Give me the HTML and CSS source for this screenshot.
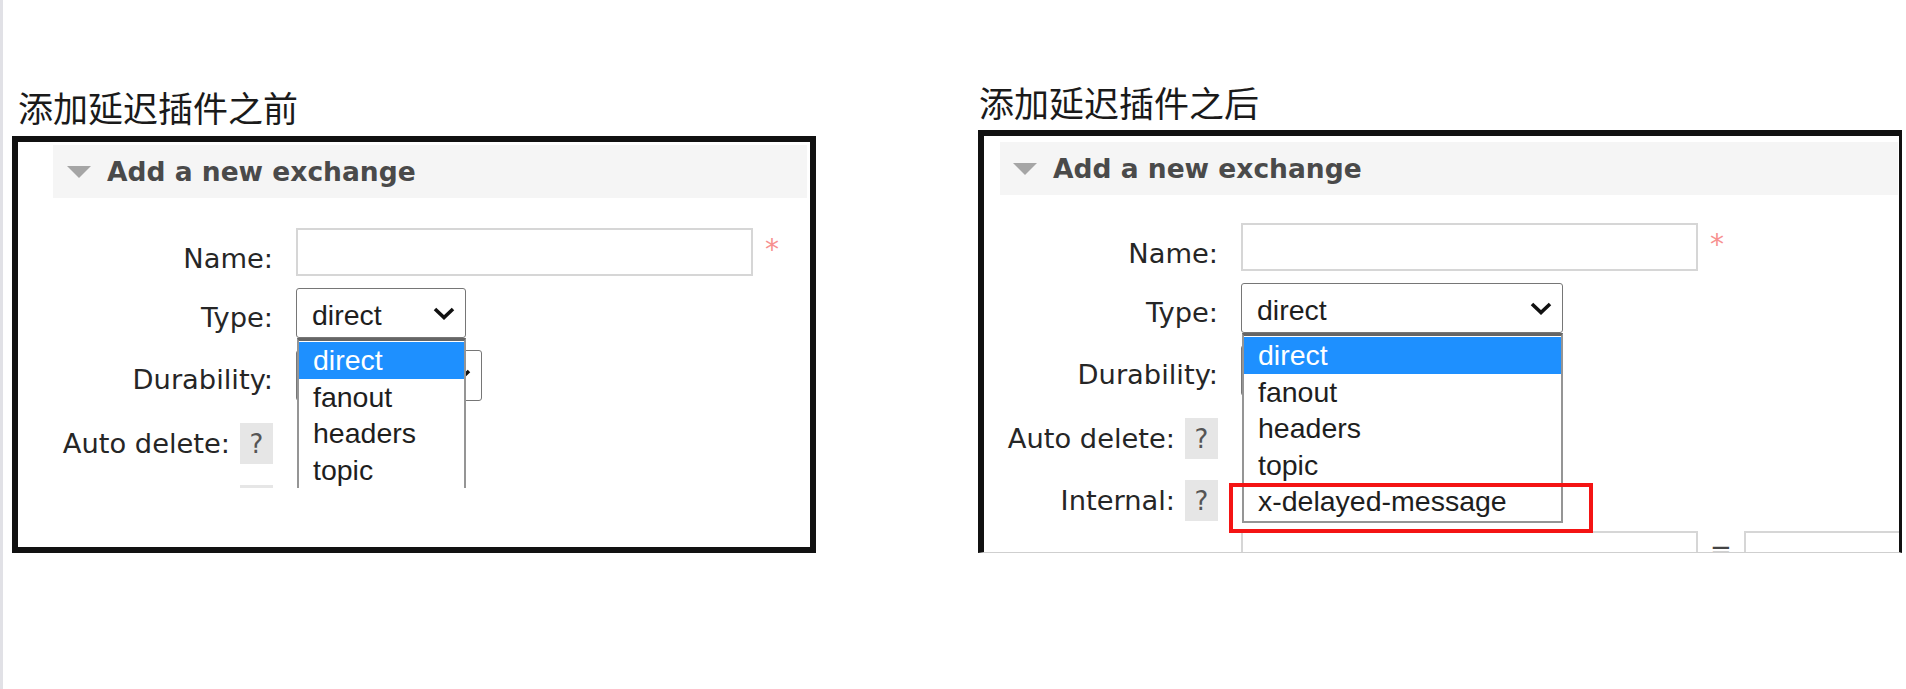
FILE: index.html
```html
<!DOCTYPE html>
<html lang="zh-CN">
<head>
<meta charset="utf-8">
<title>添加延迟插件前后 - Add a new exchange</title>
<link rel="stylesheet" href="styles.css">
</head>
<body>
<div class="page">

  <section class="panel panel--before">
    <h2 class="panel__title">添加延迟插件之前</h2>
    <div class="frame">
      <div class="shot">
        <div class="section-head"><span class="toggle"></span><span class="section-head__text">Add a new exchange</span></div>
        <div class="form">
          <div class="row row--text">
            <div class="label">Name:</div>
            <div class="control">
              <input class="input" type="text" aria-label="Name">
              <span class="mand">*</span>
            </div>
          </div>
          <div class="row row--select">
            <div class="label">Type:</div>
            <div class="control">
              <div class="select select--type">
                <span class="select__value">direct</span>
                <svg class="chevron" viewBox="0 0 22 13" aria-hidden="true"><polyline points="2,2 11,10.5 20,2"/></svg>
                <ul class="options">
                  <li class="option option--active">direct</li>
                  <li class="option">fanout</li>
                  <li class="option">headers</li>
                  <li class="option">topic</li>
                </ul>
              </div>
            </div>
          </div>
          <div class="row row--select">
            <div class="label">Durability:</div>
            <div class="control">
              <div class="select select--durability" aria-label="Durability">
                <svg class="chevron" viewBox="0 0 22 13" aria-hidden="true"><polyline points="2,2 11,10.5 20,2"/></svg>
              </div>
            </div>
          </div>
          <div class="row">
            <div class="label">Auto delete:<span class="help">?</span></div>
            <div class="control"></div>
          </div>
          <div class="row">
            <div class="label"><span class="help help--cut"></span></div>
            <div class="control"></div>
          </div>
        </div>
      </div>
    </div>
  </section>

  <section class="panel panel--after">
    <h2 class="panel__title">添加延迟插件之后</h2>
    <div class="frame">
      <div class="shot">
        <div class="section-head"><span class="toggle"></span><span class="section-head__text">Add a new exchange</span></div>
        <div class="form">
          <div class="row row--text">
            <div class="label">Name:</div>
            <div class="control">
              <input class="input" type="text" aria-label="Name">
              <span class="mand">*</span>
            </div>
          </div>
          <div class="row row--select">
            <div class="label">Type:</div>
            <div class="control">
              <div class="select select--type">
                <span class="select__value">direct</span>
                <svg class="chevron" viewBox="0 0 22 13" aria-hidden="true"><polyline points="2,2 11,10.5 20,2"/></svg>
                <ul class="options">
                  <li class="option option--active">direct</li>
                  <li class="option">fanout</li>
                  <li class="option">headers</li>
                  <li class="option">topic</li>
                  <li class="option option--marked">x-delayed-message<span class="mark-box"></span></li>
                </ul>
              </div>
            </div>
          </div>
          <div class="row row--select">
            <div class="label">Durability:</div>
            <div class="control">
              <div class="select select--durability" aria-label="Durability">
                <svg class="chevron" viewBox="0 0 22 13" aria-hidden="true"><polyline points="2,2 11,10.5 20,2"/></svg>
              </div>
            </div>
          </div>
          <div class="row">
            <div class="label">Auto delete:<span class="help">?</span></div>
            <div class="control"></div>
          </div>
          <div class="row">
            <div class="label">Internal:<span class="help">?</span></div>
            <div class="control"></div>
          </div>
          <div class="row row--args">
            <div class="label"></div>
            <div class="control">
              <input class="input" type="text" aria-label="Argument key">
              <span class="equals">=</span>
              <input class="input" type="text" aria-label="Argument value">
            </div>
          </div>
        </div>
      </div>
    </div>
  </section>

</div>
</body>
</html>
```

FILE: styles.css
```css
* {
  box-sizing: border-box;
}

html,
body {
  margin: 0;
  background: #fff;
}

body {
  font-family: "DejaVu Sans", Verdana, sans-serif;
  color: #333;
}

.page {
  display: flex;
  align-items: flex-start;
  width: 1906px;
  height: 689px;
  border-left: 3px solid #e1e1e6;
  overflow: hidden;
}

.panel {
  flex: none;
}

.panel--before {
  width: 804px;
  margin-left: 9px;
  padding-top: 89px;
}

.panel--after {
  width: 924px;
  margin-left: 162px;
  padding-top: 84px;
}

.panel__title {
  margin: 0;
  font: 400 35px/35px "Noto Sans CJK SC", "Noto Sans", sans-serif;
  color: #1a1a1a;
  white-space: nowrap;
}

.panel--before .panel__title {
  padding-left: 6px;
  margin-bottom: 12px;
}

.panel--after .panel__title {
  padding-left: 1px;
  margin-bottom: 11px;
}

.frame {
  background: #fff;
}

.panel--before .frame {
  height: 417px;
  border: 6px solid #111;
}

.panel--after .frame {
  border-style: solid;
  border-color: #111 #111 #cfcfcf #111;
  border-width: 6px 3px 1px 6px;
}

.shot {
  position: relative;
  overflow: hidden;
}

.panel--before .shot {
  height: 346px;
  padding-top: 3px;
}

.panel--after .shot {
  height: 416px;
  padding-top: 6px;
}

/* section header */
.section-head {
  display: flex;
  align-items: center;
  gap: 16px;
  height: 53px;
  padding-left: 14px;
  background: #f5f5f5;
}

.panel--before .section-head {
  margin: 0 3px 0 35px;
}

.panel--after .section-head {
  margin: 0 1px 0 16px;
  padding-left: 13px;
}

.toggle {
  flex: none;
  width: 0;
  height: 0;
  border-left: 12.5px solid transparent;
  border-right: 12.5px solid transparent;
  border-top: 12px solid #a5a5a5;
}

.section-head__text {
  font: 700 26.5px/30px "DejaVu Sans", Verdana, sans-serif;
  color: #4a4a4a;
  white-space: nowrap;
}

/* form */
.panel--before .form {
  --label-w: 255px;
  margin-top: 28px;
}

.panel--after .form {
  --label-w: 234px;
  margin-top: 26px;
}

.row {
  display: grid;
  grid-template-columns: var(--label-w) 1fr;
  column-gap: 23px;
  align-items: start;
  height: 62px;
}

.label {
  display: flex;
  justify-content: flex-end;
  align-items: center;
  gap: 10px;
  height: 43px;
  margin-top: 10px;
  font-size: 27.3px;
  line-height: 30px;
  color: #262626;
  white-space: nowrap;
}

.row--text .label {
  margin-top: 11px;
}

.row--select .label {
  margin-top: 8px;
}

.help {
  display: inline-flex;
  justify-content: center;
  align-items: center;
  flex: none;
  width: 33px;
  height: 41px;
  background: #e6e6e6;
  font-size: 26px;
  color: #555;
}

.control {
  display: flex;
  align-items: flex-start;
  min-width: 0;
}

.input {
  flex: none;
  width: 457px;
  height: 48px;
  margin: 2px 0 0;
  padding: 0;
  border: 2px solid #d6d6d6;
  background: #fff;
  outline: none;
}

.row--args .input {
  margin-top: 0;
}

.mand {
  margin: 10px 0 0 12px;
  font-size: 28px;
  line-height: 28px;
  color: #f79090;
}

.equals {
  margin: 4px 12px 0;
  font-size: 26px;
  line-height: 30px;
  color: #444;
}

/* select boxes */
.select {
  position: relative;
  display: flex;
  justify-content: flex-end;
  align-items: center;
  flex: none;
  height: 50px;
  padding: 0 10px 0 15px;
  border: 1px solid #767676;
  border-radius: 3px;
  background: #fff;
  font: 28.5px/32px "Liberation Sans", Arial, sans-serif;
  color: #1e1e1e;
}

.select__value {
  margin-right: auto;
  padding-top: 4px;
  white-space: nowrap;
}

.chevron {
  flex: none;
  width: 22px;
  height: 13px;
  fill: none;
  stroke: #111;
  stroke-width: 3.6;
}

.select--type {
  z-index: 2;
}

.panel--before .select--type {
  width: 170px;
}

.panel--after .select--type {
  width: 322px;
}

.select--durability {
  width: 186px;
  height: 51px;
}

/* open dropdown list */
.options {
  position: absolute;
  top: calc(100% + 1px);
  left: 0;
  right: -1px;
  margin: 0;
  padding: 1px 0 1px;
  list-style: none;
  background: #fff;
  border-top: 3px solid #666;
  border-left: 2px solid #959595;
  border-right: 2px solid #959595;
  border-bottom: 2px solid #959595;
}

.option {
  position: relative;
  height: 36.5px;
  padding-left: 14px;
  line-height: 36.5px;
  color: #1e1e1e;
  white-space: nowrap;
}

.option--active {
  background: #1e90ff;
  color: #fff;
}

.mark-box {
  position: absolute;
  top: 0;
  left: -15px;
  width: 364px;
  height: 50px;
  border: 4px solid #f41414;
}
```
